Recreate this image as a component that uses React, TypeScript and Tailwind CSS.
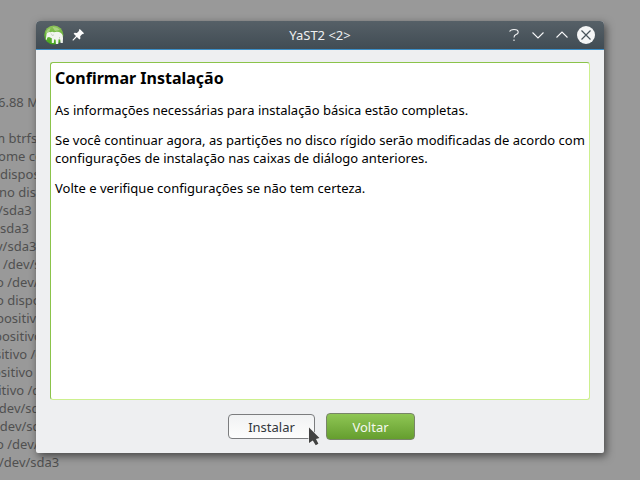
const lines: { text: string; x: number }[] = [
  { text: "6.88 MiB", x: -2 },
  { text: "", x: 0 },
  { text: "m btrfs", x: -7 },
  { text: "home com", x: -10 },
  { text: "dispositivo", x: 0 },
  { text: "no disp", x: -1 },
  { text: "/sda3", x: -2 },
  { text: "sda3", x: 0 },
  { text: "v/sda3", x: -4 },
  { text: "/dev/sd", x: 3 },
  { text: "o /dev/s", x: -4 },
  { text: "o dispo", x: -4 },
  { text: "positivo", x: -4 },
  { text: "positivo", x: -6 },
  { text: "sitivo /d", x: -5 },
  { text: "ositivo", x: -7 },
  { text: "sitivo /de", x: -8 },
  { text: "/dev/sda", x: -6 },
  { text: "/dev/sda", x: -5 },
  { text: "o /dev/s", x: -4 },
  { text: "/dev/sda3", x: -1 },
];

function Gecko() {
  return (
    <svg width="20" height="20" viewBox="0 0 20 20">
      <defs>
        <linearGradient id="ball" x1="0" y1="0" x2="0" y2="1">
          <stop offset="0" stopColor="#8fc35a" />
          <stop offset="1" stopColor="#43a51b" />
        </linearGradient>
      </defs>
      <circle cx="9.8" cy="10" r="9.6" fill="url(#ball)" />
      <path d="M2 8Q2.5 4 6.5 3Q6 6 4.5 7.5zM8.5 2Q13 1.5 16 5L11 6z" fill="#b1d68c" opacity=".8" />
      <path
        d="M2.6 8.6Q4 6.6 6.6 7.2Q8 6.4 10 7.2Q14 6 17 8Q19.2 9.5 19 13L18.8 18H16.6L16.2 14.5L14.6 14.2L14.2 19H11.9L11.6 14.8L10.2 14.3L9.8 18H7.8V13.2L5 12L3.4 12.6L2.6 15L1.8 14.6Z"
        fill="#f1f4ee"
      />
      <path d="M7.2 8.5Q8 12 10 9.8M15.5 12V13.6" fill="none" stroke="#b8c2b2" strokeWidth=".7" />
    </svg>
  );
}

function Pin() {
  return (
    <svg width="12" height="12" viewBox="0 0 12 12" fill="#fcfcfc">
      <path d="M7.8 0L12 4.2L11 5.2L10.3 4.9L8.2 7.2L8.4 9.4L7.4 10.4L4.9 8L1.1 11.7L.4 11.1L4 7.1L1.6 4.7L2.6 3.7L4.9 3.9L7.2 1.8L6.8 1Z" />
    </svg>
  );
}

export default function App() {
  return (
    <div className="relative h-[480px] w-[640px] overflow-hidden bg-[#999999] font-['Noto_Sans',sans-serif] text-[13px] leading-[18px]">
      <div className="pt-[93px] text-[#505050]">
        {lines.map((l, i) => (
          <div key={i} className="h-[18px] whitespace-pre" style={{ marginLeft: l.x }}>
            {l.text}
          </div>
        ))}
      </div>

      <div className="absolute left-9 top-[21px] flex h-[432px] w-[568px] flex-col overflow-hidden rounded-t-[4px] rounded-b-[2px] bg-[#eeeff1] shadow-[2px_3px_8px_rgba(0,0,0,0.55)]">
        <div className="grid h-[29px] shrink-0 grid-cols-[1fr_auto_1fr] items-center border-b border-[#3c8fc8] bg-linear-to-b from-[#566067] to-[#414c54] px-2 text-[#eff0f1]">
          <div className="flex items-center gap-2">
            <Gecko />
            <Pin />
          </div>
          <div>YaST2 &lt;2&gt;</div>
          <svg
            className="justify-self-end"
            width="90"
            height="20"
            viewBox="0 0 90 20"
            fill="none"
            stroke="#f4f5f6"
            strokeWidth="1.1"
          >
            <path d="M3.7 6.6Q4.2 4.5 8 4.5Q12.2 4.5 12.2 7.2Q12.2 8.7 10 9.5Q8 10.3 8 12.5" strokeLinejoin="round" />
            <path d="M8 14.6V16" />
            <path d="M26.5 7.5L32 13L37.5 7.5M50.5 12.5L56 7L61.5 12.5" />
            <circle cx="80" cy="10" r="9" fill="#f4f5f6" stroke="none" />
            <path d="M75.5 5.5L84.5 14.5M84.5 5.5L75.5 14.5" stroke="#47525a" strokeWidth="1.2" />
          </svg>
        </div>

        <div className="mx-3.5 mt-3 h-[338px] shrink-0 rounded-[3px] border border-t-[#8bc34a] border-r-[#cdf08e] border-b-[#cdf08e] border-l-[#8bc34a] bg-white px-1 pt-[5px] text-black">
          <h1 className="whitespace-nowrap text-[16px] font-bold leading-[20px]">Confirmar Instalação</h1>
          <p className="mt-[13px] whitespace-nowrap">As informações necessárias para instalação básica estão completas.</p>
          <p className="mt-3 whitespace-nowrap">
            Se você continuar agora, as partições no disco rígido serão modificadas de acordo com
            <br />
            configurações de instalação nas caixas de diálogo anteriores.
          </p>
          <p className="mt-3 whitespace-nowrap">Volte e verifique configurações se não tem certeza.</p>
        </div>

        <div className="mt-[13px] flex items-center justify-center gap-[11px] pl-[3px]">
          <button className="h-[25px] w-[87px] rounded-[4px] border border-[#7b7c7e] bg-linear-to-b from-[#f1f2f3] to-[#fdfdfd] text-[#31363b]">
            Instalar
          </button>
          <button className="h-[27px] w-[89px] rounded-[4px] border border-[#788568] bg-linear-to-b from-[#8fc654] to-[#659e2e] text-[#f4f8ef]">
            Voltar
          </button>
        </div>
      </div>

      <svg className="absolute left-[307px] top-[425px]" width="16" height="24" viewBox="0 0 16 24">
        <path
          d="M2 2.5V18L5.8 15.5L8.7 20.3L11.4 18.8L9 14L12.5 13Z"
          fill="#424242"
          stroke="#f5f5f5"
          strokeWidth="1.2"
          paintOrder="stroke"
        />
      </svg>
    </div>
  );
}
